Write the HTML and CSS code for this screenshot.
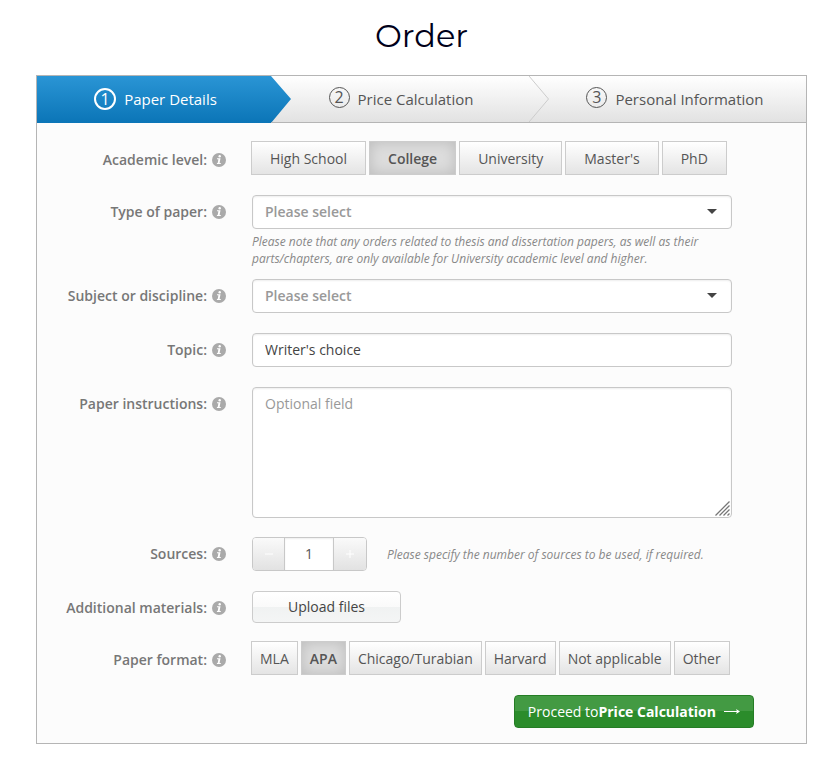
FILE: index.html
```html
<!DOCTYPE html>
<html lang="en">
<head>
  <meta charset="UTF-8">
  <meta name="viewport" content="width=device-width, initial-scale=1">
  <title>Order</title>
  <link rel="stylesheet" href="styles.css">
</head>
<body>
  <!-- shared info icon -->
  <svg class="sprite" width="0" height="0" aria-hidden="true">
    <symbol id="info" viewBox="0 0 14 14">
      <circle cx="7" cy="7" r="7" fill="#aaa"/>
      <circle cx="7.7" cy="3.2" r="1.2" fill="#fff"/>
      <path d="M5 5.2h3.5L7.6 10h1.2v1.1H4.9V10h.8l.7-3.7H5z" fill="#fff"/>
    </symbol>
  </svg>

  <main class="page">
    <h1>Order</h1>
    <form class="order" id="order-form">
      <nav class="steps">
        <a href="#details" class="step step-first active">
          <span class="num">1</span>Paper Details
          <svg class="arrow" viewBox="0 0 20 47"><path d="M0 0H20V47H0L20 23Z" fill="url(#bg)"/><path d="M0 46.5H20" stroke="#b5b5b5"/><defs><linearGradient id="bg" x1="0" y1="0" x2="0" y2="1"><stop offset="0" stop-color="#fff"/><stop offset="1" stop-color="#e2e2e2"/></linearGradient></defs></svg>
        </a>
        <a href="#price" class="step step-second">
          <span class="num">2</span>Price Calculation
          <svg class="arrow" viewBox="0 0 20 47"><path d="M0 0L19.5 23L0 46" fill="none" stroke="#ccc"/></svg>
        </a>
        <a href="#personal" class="step step-third"><span class="num">3</span>Personal Information</a>
      </nav>

      <div class="fields" id="details">
        <div class="row row-options" role="radiogroup" aria-labelledby="level-label">
          <span class="label" id="level-label">Academic level: <svg class="info"><use href="#info"/></svg></span>
          <div class="options">
            <label><input type="radio" name="level"><span>High School</span></label>
            <label><input type="radio" name="level" checked><span>College</span></label>
            <label><input type="radio" name="level"><span>University</span></label>
            <label><input type="radio" name="level"><span>Master's</span></label>
            <label><input type="radio" name="level"><span>PhD</span></label>
          </div>
        </div>

        <div class="row row-hint">
          <label class="label" for="type">Type of paper: <svg class="info"><use href="#info"/></svg></label>
          <div class="control">
            <div class="select">
              <select id="type" name="type"><option>Please select</option></select>
            </div>
            <p class="hint">Please note that any orders related to thesis and dissertation papers, as well as their parts/chapters, are only available for University academic level and higher.</p>
          </div>
        </div>

        <div class="row">
          <label class="label" for="subject">Subject or discipline: <svg class="info"><use href="#info"/></svg></label>
          <div class="control select">
            <select id="subject" name="subject"><option>Please select</option></select>
          </div>
        </div>

        <div class="row">
          <label class="label" for="topic">Topic: <svg class="info"><use href="#info"/></svg></label>
          <div class="control"><input class="text" type="text" id="topic" name="topic" value="Writer's choice"></div>
        </div>

        <div class="row">
          <label class="label" for="instructions">Paper instructions: <svg class="info"><use href="#info"/></svg></label>
          <div class="control">
            <textarea class="text" id="instructions" name="instructions" placeholder="Optional field"></textarea>
            <svg class="grip" viewBox="0 0 15 15"><path d="M.5 14.5L14.5 .5M4.5 14.5L14.5 4.5M8.5 14.5L14.5 8.5M12.5 14.5L14.5 12.5" stroke="#777" stroke-width="1.3"/></svg>
          </div>
        </div>

        <div class="row">
          <label class="label" for="sources">Sources: <svg class="info"><use href="#info"/></svg></label>
          <div class="control sources">
            <div class="counter">
              <button type="button" aria-label="Less"><svg viewBox="0 0 8 8"><path d="M0 4H8" stroke="#fff"/></svg></button>
              <input type="text" id="sources" name="sources" value="1">
              <button type="button" aria-label="More"><svg viewBox="0 0 8 8"><path d="M0 4H8M4 0V8" stroke="#fff"/></svg></button>
            </div>
            <p class="hint">Please specify the number of sources to be used, if required.</p>
          </div>
        </div>

        <div class="row row-upload">
          <label class="label" for="upload">Additional materials: <svg class="info"><use href="#info"/></svg></label>
          <button type="button" class="upload" id="upload">Upload files</button>
        </div>

        <div class="row row-options" role="radiogroup" aria-labelledby="format-label">
          <span class="label" id="format-label">Paper format: <svg class="info"><use href="#info"/></svg></span>
          <div class="options options-small">
            <label><input type="radio" name="format"><span>MLA</span></label>
            <label><input type="radio" name="format" checked><span>APA</span></label>
            <label><input type="radio" name="format"><span>Chicago/Turabian</span></label>
            <label><input type="radio" name="format"><span>Harvard</span></label>
            <label><input type="radio" name="format"><span>Not applicable</span></label>
            <label><input type="radio" name="format"><span>Other</span></label>
          </div>
        </div>

        <div class="actions">
          <button type="submit" class="proceed">Proceed to<b>Price Calculation</b>
            <svg viewBox="0 0 16 8"><path d="M0 3.500H15" stroke="#fff"/><path d="M12 1L16 3.500L12 6L13 3.500Z" fill="#fff"/></svg>
          </button>
        </div>
      </div>
    </form>
  </main>
</body>
</html>
```

FILE: styles.css
```css
* { box-sizing: border-box; }
body { margin: 0; background: #fff; font: 14px/20px "Open Sans", sans-serif; color: #555; }
button, input, select, textarea { font: inherit; color: inherit; margin: 0; }
p { margin: 0; }
.sprite { position: absolute; }
.page { padding: 16px 25px 25px 36px; }
h1 { margin: 0 0 19px; font: 400 32px/40px Montserrat, Inter, sans-serif; color: #000019; text-align: center; }
.order { border: 1px solid #b5b5b5; background: #fcfcfc; }

/* steps */
.steps { display: grid; grid-template-columns: 254fr 258fr 257fr; height: 47px; border-bottom: 1px solid #b5b5b5; background: linear-gradient(#fff, #e2e2e2); }
.step { position: relative; display: flex; align-items: center; justify-content: center; gap: 8px; font-size: 15px; color: #555; text-decoration: none; white-space: nowrap; }
.step-first { padding-right: 17px; }
.step-second { padding-right: 38px; }
.step-third { padding-right: 5px; }
.step.active { margin-bottom: -1px; padding-bottom: 1px; color: #fff; background: linear-gradient(#2a95d5, #0b75b7); }
.num { width: 21px; height: 21px; margin-bottom: 3px; border: 1px solid #555; border-radius: 50%; font-size: 16px; line-height: 18px; text-align: center; }
.active .num { width: 22px; height: 22px; margin-bottom: 0; border: 2px solid #fff; line-height: 18px; }
.arrow { position: absolute; top: 0; right: 0; width: 20px; height: 47px; }

/* form rows */
.fields { padding: 18px 52px 15px 0; }
.row { display: grid; grid-template-columns: 189px minmax(0, 480px); column-gap: 26px; margin-bottom: 20px; }
.row-hint { margin-bottom: 12px; }
.row-upload { height: 32px; margin-bottom: 18px; }
.label { display: flex; align-items: center; justify-content: flex-end; gap: 5px; height: 34px; font-weight: 600; color: #777; white-space: nowrap; }
.row-options .label { padding-top: 4px; }
.info { width: 14px; height: 14px; }
.control { position: relative; }
.hint { margin-top: 4px; font-size: 12px; line-height: 17px; font-style: italic; color: #888; }

.options { display: flex; gap: 3px; margin: 0 -4px 0 -1px; white-space: nowrap; }
.options label { position: relative; }
.options input { position: absolute; inset: 0; opacity: 0; }
.options span { display: block; height: 34px; padding: 0 18px; border: 1px solid #ccc; background: linear-gradient(#fff, #e4e4e4); line-height: 34px; }
.options-small span { padding: 0 8px; }
.options input:checked + span { background: #ddd; box-shadow: inset 0 0 14px #bbb; font-weight: 600; }

.text, .select select { display: block; width: 100%; height: 34px; padding: 0 12px; border: 1px solid #c8c8c8; border-radius: 4px; background: #fff; box-shadow: inset 0 1px 2px #eee; }
.text { padding-bottom: 2px; color: #444; }
textarea.text { height: 131px; padding: 6px 12px; margin-bottom: -1px; resize: none; }
.text::placeholder { color: #999; }
.select select { appearance: none; color: #999; font-weight: 600; }
.select { position: relative; }
.select::after { content: ""; position: absolute; top: 14px; right: 15px; border: 5px solid transparent; border-top-color: #444; border-bottom: 0; pointer-events: none; }
.grip { position: absolute; right: 2px; bottom: 1px; width: 15px; height: 15px; pointer-events: none; }

.sources { display: flex; align-items: center; gap: 20px; }
.sources .hint { margin: 0; }
.counter { display: flex; width: 115px; height: 34px; border: 1px solid #c8c8c8; border-radius: 4px; overflow: hidden; }
.counter button { width: 31px; padding: 0; border: 0; background: linear-gradient(#fafafa, #e2e2e2); }
.counter button:last-child { flex: 1; }
.counter svg { display: block; width: 8px; height: 8px; margin: auto; }
.counter input { width: 50px; padding: 0; border: solid #c8c8c8; border-width: 0 1px; background: #fff; box-shadow: inset 0 1px 2px #eee; text-align: center; }

.upload { width: 149px; height: 32px; padding: 0; border: 1px solid #ccc; border-radius: 4px; background: linear-gradient(#fff, #fafafa 50%, #f0f2f2 50%, #f4f5f5); color: #444; }
.actions { display: flex; justify-content: flex-end; }
.proceed { display: flex; align-items: center; height: 33px; padding: 0 13px; border: 1px solid #257d25; border-radius: 4px; background: linear-gradient(#439a43 50%, #2b8c2b 50%); color: #fff; white-space: nowrap; }
.proceed b { font-weight: 700; }
.proceed svg { width: 16px; height: 8px; margin-left: 8px; }
```
